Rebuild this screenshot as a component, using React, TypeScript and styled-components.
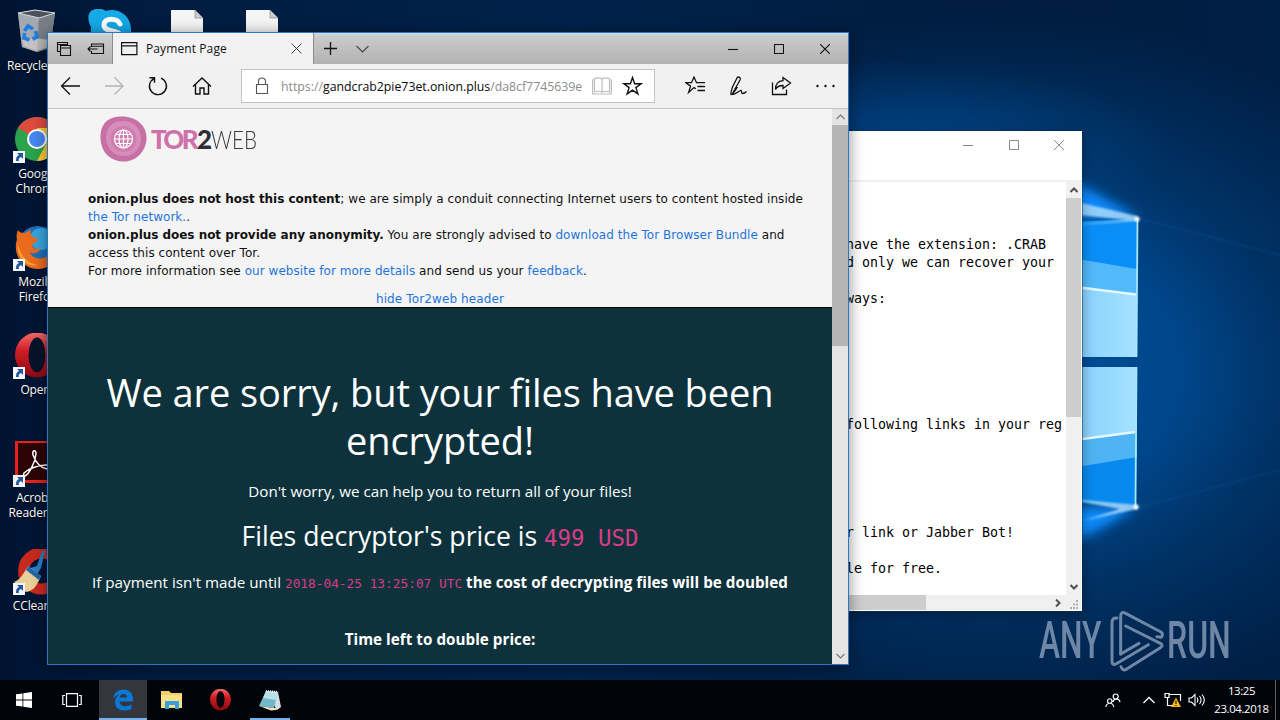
import React from "react";
import styled, { createGlobalStyle } from "styled-components";

const Global = createGlobalStyle`
  *, *::before, *::after { box-sizing: border-box; }
  body { margin: 0; background: #001a3c; }
  svg { display: block; flex: none; }
`;

const ui = `"Open Sans", "Noto Sans", sans-serif`;
const mono = `"DejaVu Sans Mono", monospace`;

/* ---------- desktop ---------- */

const Screen = styled.div`
  position: relative;
  display: flex;
  flex-direction: column;
  width: 1280px;
  height: 720px;
  overflow: hidden;
  font-family: ${ui};
  background:
    radial-gradient(ellipse 270px 90px at 900px 150px, rgba(0, 88, 170, 0.55), transparent),
    radial-gradient(ellipse 450px 360px at 1010px 370px, #00509a 0%, #00468a 38%, rgba(0, 56, 112, 0.75) 62%, rgba(0, 32, 70, 0) 100%),
    linear-gradient(90deg, #001331 0%, #001c40 12%, #00224a 45%, #001c3e 80%, #001f45 100%);
`;

const Wallpaper = styled.svg`
  position: absolute;
  inset: 0;
`;

const Desktop = styled.main`
  flex: 1;
  display: flex;
  padding-top: 9px;
  min-height: 0;
`;

const IconColumn = styled.div`
  width: 75px;
`;

const Shortcut = styled.div`
  display: flex;
  flex-direction: column;
  align-items: center;
  width: 75px;
  height: 108px;
  padding-right: 1px;
  position: relative;
`;

const ShortcutLabel = styled.div<{ $shift?: number }>`
  margin-top: 1px;
  padding-left: ${(p) => p.$shift ?? 0}px;
  color: #fff;
  font-size: 12px;
  line-height: 15.4px;
  letter-spacing: -0.15px;
  text-align: center;
  white-space: nowrap;
  text-shadow: 0 1px 2px #000;
`;

/* ---------- windows ---------- */

const NotepadWindow = styled.section`
  position: absolute;
  left: 600px;
  top: 131px;
  width: 482px;
  height: 480px;
  display: grid;
  grid-template-columns: 1fr 15px;
  grid-template-rows: 51px 413px 15px;
  padding-right: 1px;
  background: #fff;
  box-shadow: 0 0 0 1px rgba(0, 50, 100, 0.45), 0 3px 12px rgba(0, 0, 0, 0.35);
`;

const NotepadHead = styled.header`
  grid-column: 1 / -1;
  display: flex;
  justify-content: flex-end;
  align-items: flex-start;
  border-bottom: 2px solid #f0f0f0;
  margin-right: -1px;
`;

const CaptionButton = styled.span<{ $w: number; $h: number }>`
  display: grid;
  place-items: center;
  width: ${(p) => p.$w}px;
  height: ${(p) => p.$h}px;
`;

const NotepadText = styled.pre`
  margin: 0;
  padding: 54px 0 0 246px;
  overflow: hidden;
  font: 13.29px/18px ${mono};
  color: #000;
`;

const VScroll = styled.div<{ $track: string }>`
  display: flex;
  flex-direction: column;
  align-items: center;
  background: ${(p) => p.$track};
`;

const ScrollButton = styled.span`
  display: grid;
  place-items: center;
  width: 16px;
  height: 16px;
`;

const Thumb = styled.span<{ $h: number; $color: string }>`
  width: 100%;
  height: ${(p) => p.$h}px;
  background: ${(p) => p.$color};
`;

const Spacer = styled.span`
  flex: 1;
`;

const HScroll = styled.div`
  display: flex;
  align-items: center;
  background: #f0f0f0;
`;

const HThumb = styled.span`
  width: 326px;
  height: 15px;
  background: #cdcdcd;
`;

const GripCell = styled.div`
  display: flex;
  align-items: flex-end;
  justify-content: flex-end;
  padding: 0 2px 1px 0;
  background: #f0f0f0;
`;

const BrowserWindow = styled.section`
  position: absolute;
  left: 47px;
  top: 32px;
  width: 802px;
  height: 633px;
  display: flex;
  flex-direction: column;
  border: 1px solid #2a78c2;
  background: #f4f4f4;
  box-shadow: 0 2px 14px rgba(0, 0, 0, 0.45);
`;

const TabStrip = styled.header`
  display: flex;
  height: 31px;
  background: linear-gradient(#c9dbea 0, #cbcbcb 3px, #b2b2b2 100%);
`;

const TabTools = styled.div`
  display: flex;
  align-items: center;
  width: 65px;
  padding-left: 8px;
  gap: 15px;
  border-right: 1px solid #8d8d8d;
`;

const Tab = styled.div`
  display: flex;
  align-items: center;
  width: 201px;
  padding: 0 11px 0 8px;
  background: #f2f2f2;
  border-right: 1px solid #8d8d8d;
`;

const TabTitle = styled.span`
  flex: 1;
  padding-left: 8px;
  font-size: 12px;
  letter-spacing: 0.1px;
  color: #111;
`;

const TabActions = styled.div`
  display: flex;
  align-items: center;
  flex: 1;
  gap: 19px;
  padding-left: 10px;
`;

const Toolbar = styled.nav`
  display: flex;
  align-items: center;
  height: 45px;
  padding: 0 11px 0 11px;
  background: #f1f1f1;
  border-bottom: 1px solid #c4c4c4;
`;

const NavButtons = styled.div`
  display: flex;
  gap: 20px;
  width: 182px;
`;

const AddressBar = styled.div`
  display: flex;
  align-items: center;
  width: 414px;
  height: 34px;
  padding: 0 10px 0 12px;
  background: #fff;
  border: 1px solid #c3c3c3;
`;

const Url = styled.span`
  flex: 1;
  padding-left: 11px;
  font-size: 12.3px;
  color: #8c8c8c;
  white-space: nowrap;
`;

const UrlHost = styled.span`
  color: #0a0a0a;
`;

const ToolButtons = styled.div`
  display: flex;
  align-items: center;
  gap: 22px;
  margin-left: 30px;
`;

const Viewport = styled.div`
  flex: 1;
  display: flex;
  min-height: 0;
`;

const Page = styled.div`
  flex: 1;
  overflow: hidden;
`;

const ProxyHeader = styled.div`
  height: 199px;
  padding: 7px 0 0 40px;
  border-bottom: 1px solid #000;
  background: #f4f4f4;
  font: 12px/18px "DejaVu Sans", Verdana, sans-serif;
  letter-spacing: 0.05px;
  color: #111;

  b { letter-spacing: -0.03px; }
`;

const Logo = styled.div`
  display: flex;
  align-items: center;
  height: 46px;
  padding-left: 12px;
  font-family: Lato, sans-serif;
  font-size: 26px;
  line-height: 46px;
`;

const LogoTor = styled.span`
  width: 46px;
  margin-left: 4px;
  font-weight: 900;
  letter-spacing: -2.8px;
  color: #cf72ab;
`;

const LogoTwo = styled.span`
  width: 14px;
  font-weight: 900;
  color: #2d2d33;
`;

const LogoWeb = styled.span`
  font-weight: 300;
  color: #3a3a3a;
  transform: scaleX(0.79);
  transform-origin: left;
`;

const Notice = styled.p`
  margin: 28px 0 0;
  white-space: nowrap;
`;

const Link = styled.span`
  color: #1f74dc;
`;

const HideLink = styled.div`
  margin: 10px 0 0 -40px;
  text-align: center;
  letter-spacing: 0.12px;
`;

const Ransom = styled.div`
  height: 357px;
  padding-top: 60px;
  background: #0e323c;
  color: #fff;
  text-align: center;
  white-space: nowrap;
`;

const Title = styled.h1`
  margin: 0;
  font-size: 38px;
  font-weight: 400;
  line-height: 48px;
  letter-spacing: -0.1px;
`;

const Lead = styled.p`
  margin: 15px 0 0;
  font-size: 15.2px;
  line-height: 24px;
`;

const Price = styled.h2`
  margin: 16px 0 0;
  font-size: 26.6px;
  font-weight: 400;
  line-height: 34px;
`;

const Code = styled.code<{ $size: number }>`
  font-family: ${mono};
  font-size: ${(p) => p.$size}px;
  color: #d93c87;
`;

const Deadline = styled.p`
  margin: 15px 0 0;
  font-size: 15.2px;
  line-height: 24px;
`;

const Strong = styled.strong`
  font-weight: 700;
  letter-spacing: 0.04px;
`;

const Timer = styled.p`
  margin: 31px 0 0;
  font-size: 15.2px;
  line-height: 24px;
`;

/* ---------- watermark and taskbar ---------- */

const Watermark = styled.div`
  position: absolute;
  left: 1039px;
  top: 608px;
  display: flex;
  align-items: center;
  height: 66px;
  color: #8b9fbb;
  opacity: 0.8;
  font: 500 52px/66px Roboto, sans-serif;
`;

const Word = styled.span<{ $w: number; $scale: number }>`
  width: ${(p) => p.$w}px;
  transform: scaleX(${(p) => p.$scale});
  transform-origin: left;
`;

const Taskbar = styled.footer`
  position: relative;
  display: flex;
  height: 40px;
  background: #010409;
`;

const TaskButton = styled.span<{ $active?: boolean; $gap?: number }>`
  display: grid;
  place-items: center;
  width: 48px;
  height: 40px;
  margin-left: ${(p) => p.$gap ?? 0}px;
  background: ${(p) => (p.$active ? "#33373d" : "transparent")};
  box-shadow: ${(p) => (p.$active ? "inset 0 -2px #76b2ea" : "none")};
`;

const RunningButton = styled(TaskButton)`
  width: 40px;
  box-shadow: inset 0 -2px #76b2ea;
`;

const Tray = styled.div`
  display: flex;
  align-items: center;
  margin-left: auto;
`;

const TrayIcon = styled.span<{ $w: number }>`
  display: grid;
  place-items: center;
  width: ${(p) => p.$w}px;
`;

const Clock = styled.div`
  width: 66px;
  padding-right: 1px;
  color: #fff;
  font-size: 11.4px;
  line-height: 18px;
  letter-spacing: -0.38px;
  text-align: center;
`;

const ShowDesktop = styled.span`
  width: 5px;
  height: 40px;
  border-left: 1px solid #5b5f66;
`;

/* ---------- icons ---------- */

const Stroke = ({ w, h, d, c = "#111", s = 1.1 }: { w: number; h: number; d: string; c?: string; s?: number }) => (
  <svg width={w} height={h} viewBox={`0 0 ${w} ${h}`} fill="none" stroke={c} strokeWidth={s}>
    <path d={d} />
  </svg>
);

const Arrow = () => (
  <g>
    <rect x="0" y="34" width="12" height="12" fill="#f4f8fc" />
    <path d="M3 44c0-4 1-5 3-6l-2-2h6v6l-2-2c-2 1-3 2-2 4z" fill="#23569f" />
  </g>
);

const RecycleIcon = () => (
  <svg width="48" height="48" viewBox="0 0 48 48">
    <path d="M5 4 22 1l20 3-5 35-13 4-15-5z" fill="#8d949c" />
    <path d="M5 4 26 9l-2 34-15-5z" fill="#a3a9b0" />
    <path d="M26 9 42 4l-5 35-13 4z" fill="#797f86" />
    <path d="m5 4 17-3 20 3-16 5z" fill="#4b5259" stroke="#d8dde2" strokeWidth="1" />
    <path d="m9 31 14-2 13 2-1 7-11 4-13-5z" fill="#d5cfca" opacity=".7" />
    <g fill="none" stroke="#1f7fe0" strokeWidth="3.6">
      <path d="m11.500 22 3.500-5 5 3M22.500 22l1.500 6-4.500 2M16.500 31l-5.500-2 .5-5" />
    </g>
  </svg>
);

const ChromeIcon = () => (
  <svg width="48" height="48" viewBox="0 0 48 48">
    <circle cx="24" cy="22" r="22" fill="#2ba24c" />
    <path d="M24 22 5 11A22 22 0 0 1 43 11z" fill="#dd4b3e" />
    <path d="M24 11h19a22 22 0 0 1-19 33l9-17z" fill="#fcc934" />
    <circle cx="24" cy="22" r="10" fill="#fff" />
    <circle cx="24" cy="22" r="8" fill="#4688f1" />
    <Arrow />
  </svg>
);

const FirefoxIcon = () => (
  <svg width="48" height="48" viewBox="0 0 48 48">
    <circle cx="25" cy="22" r="21" fill="#1d6fb8" />
    <circle cx="28" cy="14" r="11" fill="#37a4dd" />
    <path d="M5 5c2 3 4 3 7 3 3-2 5-3 6-3-1 3 0 5 2 7l5 2c-1 4-6 4-6 7 2 4 6 3 9 3-3 5-9 5-11 3 2 7 12 9 19 3 4-3 6-8 6-12 7 12-2 26-17 26C10 44-1 30 4 14c-1-3 0-7 1-9z" fill="#ea6a1e" />
    <path d="M5 18c2 12 8 20 20 22-12 3-22-8-20-22z" fill="#f7a32b" />
    <Arrow />
  </svg>
);

const OperaIcon = ({ size = 48, arrow = true }: { size?: number; arrow?: boolean }) => (
  <svg width={size} height={size} viewBox="0 0 48 48">
    <defs>
      <linearGradient id="opera" x1="0" y1="0" x2="0" y2="1">
        <stop offset="0" stopColor="#f36b69" />
        <stop offset=".4" stopColor="#cf1d25" />
        <stop offset="1" stopColor="#8d0a12" />
      </linearGradient>
    </defs>
    <ellipse cx="24" cy="22" rx="22" ry="22.500" fill="url(#opera)" />
    <ellipse cx="24" cy="22" rx="8.500" ry="17.500" fill={arrow ? "#07132b" : "#020409"} />
    {arrow && <Arrow />}
  </svg>
);

const AcrobatIcon = () => (
  <svg width="48" height="48" viewBox="0 0 48 48">
    <rect x="3.500" y=".5" width="43" height="40" fill="#2c0406" stroke="#e8221a" strokeWidth="3" />
    <path d="M12 35c4-2 10-13 11-22 0-5-4-4-3 1 3 8 8 13 14 14 6 0 5-4-1-4-8 0-18 4-22 8-1 2 0 3 1 3z" fill="none" stroke="#fff" strokeWidth="1.500" />
    <Arrow />
  </svg>
);

const CCleanerIcon = () => (
  <svg width="48" height="48" viewBox="0 0 48 48">
    <path d="M42 10A18 18 0 1 0 42 34" fill="none" stroke="#c8291f" strokeWidth="11" />
    <path d="M29 2h3l-4 17-5 8-9-7 10-3z" fill="#2b7cc8" />
    <path d="m15 17 13 10c-4 10-8 15-15 16L1 33c6-2 10-9 14-16z" fill="#e9cf98" />
    <path d="m15 17 13 10-2 4-13-10z" fill="#2165ab" />
    <Arrow />
  </svg>
);

const SkypeIcon = () => (
  <svg width="48" height="48" viewBox="0 0 48 48">
    <path d="M3 2C7-1 14-1 18 2c13-4 26 6 25 20l1 20H14C4 36 2 28 3 18 0 12-1 6 3 2z" fill="#15a9e8" />
    <path d="M32 15c-2-6-16-7-16 1 0 8 16 4 16 11 0 6-13 6-16-1" fill="none" stroke="#fff" strokeWidth="5" strokeLinecap="round" />
  </svg>
);

const FileIcon = () => (
  <svg width="48" height="48" viewBox="0 0 48 48">
    <path d="M8 1h24l8 8v38H8z" fill="#f5f5f5" />
    <path d="M32 1v8h8z" fill="#c9ccd0" stroke="#8f9499" strokeWidth=".8" />
  </svg>
);

const GlobeBadge = () => (
  <svg width="47" height="46" viewBox="0 0 47 46">
    <path d="M22 .5c14 0 25 9 24.500 22S36 45.500 24 45.500 1 38 .5 22 10 .5 22 .5z" fill="#c770a5" />
    <path d="M23 5c11 0 18 8 18 18s-8 17-17 17S6 33 6 22 13 5 23 5z" fill="#d78dba" />
    <circle cx="23.500" cy="23" r="13" fill="#cf7db0" />
    <g fill="none" stroke="#fff" strokeWidth="1.200">
      <circle cx="23.500" cy="23" r="9" />
      <ellipse cx="23.500" cy="23" rx="4.500" ry="9" />
      <path d="M23.500 14v18M14.500 23h18M16 18.500h15M16 27.500h15" />
    </g>
  </svg>
);

const Grip = () => (
  <svg width="9" height="9" fill="#b0b0b0">
    <path d="M6 0h2v2H6zM6 3.500h2v2H6zM6 7h2v2H6zM3 3.500h2v2H3zM3 7h2v2H3zM0 7h2v2H0z" />
  </svg>
);

const AnyRunMark = () => (
  <svg width="58" height="65" viewBox="268 25 174 195" fill="none" stroke="currentColor" strokeWidth="9" strokeLinejoin="round" strokeLinecap="round">
    <path d="M292 52Q277 50 277 66V182Q277 196 290 189L386 132" />
    <path d="M303 160V48Q303 30 318 38L424 94Q433 101 424 110L412 108" />
    <path d="M318 76 422 128Q432 134 422 141L320 206Q308 212 304 198" />
    <path d="M303 160 358 128" />
  </svg>
);

/* ---------- screen ---------- */

const shortcuts = [
  { icon: <RecycleIcon />, label: ["Recycle Bin"], shift: 1 },
  { icon: <ChromeIcon />, label: ["Google", "Chrome"], shift: 1 },
  { icon: <FirefoxIcon />, label: ["Mozilla", "Firefox"], shift: 1 },
  { icon: <OperaIcon />, label: ["Opera"], shift: 1 },
  { icon: <AcrobatIcon />, label: ["Acrobat", "Reader DC"], shift: 1 },
  { icon: <CCleanerIcon />, label: ["CCleaner"], shift: 1 },
];

const note = [
  "have the extension: .CRAB", "d only we can recover your", "", "ways:", "", "", "", "", "", "",
  "following links in your reg", "", "", "", "", "", "r link or Jabber Bot!", "", "le for free.",
].join("\n");

export default function App() {
  return (
    <>
      <Global />
      <Screen>
        <Wallpaper width="1280" height="680" viewBox="0 0 1280 680">
          <defs>
            <filter id="soft" x="-50%" y="-50%" width="200%" height="200%">
              <feGaussianBlur stdDeviation="6" />
            </filter>
            <filter id="fine" x="-50%" y="-50%" width="200%" height="200%">
              <feGaussianBlur stdDeviation="1.300" />
            </filter>
            <linearGradient id="pane" x1="0" x2="1" y1="0" y2="0">
              <stop offset="0" stopColor="#7dccff" />
              <stop offset="1" stopColor="#a6e2ff" />
            </linearGradient>
          </defs>
          <path d="M1060 176 1090 190 1140 218H1060zM1060 545 1095 532 1138 507H1060z" fill="#0a8cff" filter="url(#soft)" />
          <path d="M1060 222 1137 219V357H1060z" fill="#0a8ef5" />
          <path d="M1060 256 1137 269V357H1060z" fill="#52b9fa" />
          <path d="M1060 285 1137 295V357H1060z" fill="url(#pane)" />
          <path d="M1060 285 1136 294.500" stroke="#e6f8ff" strokeWidth="2.500" />
          <path d="M1060 367H1137L1135 506 1060 500z" fill="#0789ee" />
          <path d="M1060 367H1137V457L1060 470z" fill="#4fb4f3" />
          <path d="M1060 367H1137V431L1060 441z" fill="url(#pane)" />
          <path d="M1060 442 1135 432" stroke="#e6f8ff" strokeWidth="2.500" />
          <path d="M1137.500 219 1136.500 357M1136.500 367 1135.500 506" stroke="#a6e6ff" strokeWidth="1.800" />
          <path d="M1060 198 1137 216V221L1060 213zM1060 226 1137 219V221zM1060 498 1137 505V509L1082 521 1120 509z" fill="#a8dcff" opacity=".85" filter="url(#fine)" />
          <path d="M1137 218 1280 255M1137 508 1280 470" stroke="#1672c4" strokeWidth="1.500" opacity=".22" filter="url(#fine)" />
          <circle cx="1137" cy="219" r="2.500" fill="#fff" filter="url(#fine)" />
          <circle cx="1136" cy="507" r="2.500" fill="#fff" filter="url(#fine)" />
        </Wallpaper>

        <Desktop>
          <IconColumn>
            {shortcuts.map((s) => (
              <Shortcut key={s.label[0]}>
                {s.icon}
                <ShortcutLabel $shift={s.shift}>
                  {s.label.map((line) => (
                    <div key={line}>{line}</div>
                  ))}
                </ShortcutLabel>
              </Shortcut>
            ))}
          </IconColumn>
          <Shortcut><SkypeIcon /></Shortcut>
          <Shortcut><FileIcon /></Shortcut>
          <Shortcut><FileIcon /></Shortcut>
        </Desktop>

        <NotepadWindow>
          <NotepadHead>
            <CaptionButton $w={46} $h={28}><Stroke w={10} h={10} c="#8a8a8a" s={1} d="M0 5.500h10" /></CaptionButton>
            <CaptionButton $w={45} $h={28}><Stroke w={10} h={10} c="#8a8a8a" s={1} d="M.5 .5h9v9h-9z" /></CaptionButton>
            <CaptionButton $w={46} $h={28}><Stroke w={10} h={10} c="#8a8a8a" s={1} d="m0 0 10 10M10 0 0 10" /></CaptionButton>
          </NotepadHead>
          <NotepadText>{note}</NotepadText>
          <VScroll $track="#f0f0f0">
            <ScrollButton><Stroke w={8} h={6} c="#505050" s={2} d="M.5 5 4 1.500 7.500 5" /></ScrollButton>
            <Thumb $h={219} $color="#cdcdcd" />
            <Spacer />
            <ScrollButton><Stroke w={8} h={6} c="#505050" s={2} d="M.5 1 4 4.500 7.500 1" /></ScrollButton>
          </VScroll>
          <HScroll>
            <HThumb />
            <Spacer />
            <ScrollButton><Stroke w={6} h={8} c="#505050" s={2} d="M1 .5 4.500 4 1 7.500" /></ScrollButton>
          </HScroll>
          <GripCell><Grip /></GripCell>
        </NotepadWindow>

        <BrowserWindow>
          <TabStrip>
            <TabTools>
              <Stroke w={16} h={16} s={1.1} d="M4.500 10.500h-3v-9h10v3M1.500 3.500h10M4.500 4.500h10v10h-10zM4.500 7h10" />
              <Stroke w={18} h={12} s={1.1} d="M4.500 4V1h12v9.500h-12V8M4.500 3.300h12M1 6h9.500M3.500 3.500 1 6l2.500 2.500" />
            </TabTools>
            <Tab>
              <Stroke w={17} h={14} s={1.2} d="M.6 .6h15.300v12H.6zM.6 3.800h15.300" />
              <TabTitle>Payment Page</TabTitle>
              <Stroke w={11} h={11} c="#444" s={1} d="m.5 .5 10 10M10.500 .5l-10 10" />
            </Tab>
            <TabActions>
              <Stroke w={13} h={13} s={1.3} d="M6.500 0v13M0 6.500h13" />
              <Stroke w={13} h={8} c="#444" d="m.5 1 6 6 6-6" />
            </TabActions>
            <CaptionButton $w={46} $h={31}><Stroke w={10} h={10} d="M0 5.500h10" /></CaptionButton>
            <CaptionButton $w={46} $h={31}><Stroke w={10} h={10} d="M.5 .5h9v9h-9z" /></CaptionButton>
            <CaptionButton $w={46} $h={31}><Stroke w={10} h={10} d="m0 0 10 10M10 0 0 10" /></CaptionButton>
          </TabStrip>

          <Toolbar>
            <NavButtons>
              <Stroke w={24} h={20} s={1.3} d="M21 10H3M11 1.500 2.500 10l8.500 8.500" />
              <Stroke w={24} h={20} s={1.3} c="#b2b2b2" d="M2 10h18M11.500 1.500 20 10l-8.500 8.500" />
              <Stroke w={24} h={20} s={1.4} d="M14 2.200A8.500 8.500 0 1 1 7 2.600M2.500 1.800h5v5" />
              <Stroke w={24} h={20} s={1.4} d="m2 10.500 9-8.500 9 8.500M4.500 8.500v9.500h4.500v-6h4v6h4.500V8.500" />
            </NavButtons>
            <AddressBar>
              <Stroke w={16} h={18} c="#555" d="M2.500 7.500h11v9h-11zM4.500 7.500V4.500a3.500 3.500 0 0 1 7 0v3" />
              <Url>https://<UrlHost>gandcrab2pie73et.onion.plus</UrlHost>/da8cf7745639e</Url>
              <Stroke w={20} h={18} c="#bdbdbd" s={1.2} d="M2.500 1.500c3-1 5.500-1 7.500.5v13c-2-1-4.500-1-7.500 0zM17.500 1.500c-3-1-5.500-1-7.500.5v13c2-1 4.500-1 7.500 0zM2.500 3H.6v14h18.800V3h-1.900" />
              <svg width="32" height="20" viewBox="-8 0 32 20" fill="none" stroke="#111" strokeWidth="1.400">
                <path d="m12.500 1.500 2.100 6.200h6.500l-5.200 3.900 2 6.300-5.400-3.800-5.400 3.800 2-6.300-5.200-3.900h6.500z" />
              </svg>
            </AddressBar>
            <ToolButtons>
              <Stroke w={21} h={20} s={1.3} d="M11 12.800l-2-1.200-5.400 4.800 2-6.300-4.800-3.400h5.700L9 1l2.500 5.700H20M12.500 10.500H20M12.500 14.500H20" />
              <Stroke w={21} h={20} s={1.3} d="M4.500 17.500 12 4c1-2.500-1.500-4-3-2L4.500 11c-1 3-2 6-1.500 7.500 2 0 5-5 6.500-7.500M4 18.500c4 0 6-3 8.500-4 2-.5 0 3 2 3 1.500 0 2.500-.5 4-2" />
              <Stroke w={21} h={20} s={1.3} d="M1.500 6.500v12h14v-5M12 1.500l7.500 5.500-7.500 5.500v-3c-4 0-6 1-7.500 4 0-5.500 3-8.500 7.500-8.800z" />
              <svg width="22" height="20" fill="#111">
                <circle cx="3.500" cy="10" r="1.200" />
                <circle cx="11.500" cy="10" r="1.200" />
                <circle cx="19.500" cy="10" r="1.200" />
              </svg>
            </ToolButtons>
          </Toolbar>

          <Viewport>
            <Page>
              <ProxyHeader>
                <Logo>
                  <GlobeBadge />
                  <LogoTor>TOR</LogoTor>
                  <LogoTwo>2</LogoTwo>
                  <LogoWeb>WEB</LogoWeb>
                </Logo>
                <Notice>
                  <b>onion.plus does not host this content</b>; we are simply a conduit connecting Internet users to content hosted inside
                  <br />
                  <Link>the Tor network.</Link>.
                  <br />
                  <b>onion.plus does not provide any anonymity.</b> You are strongly advised to <Link>download the Tor Browser Bundle</Link> and
                  <br />
                  access this content over Tor.
                  <br />
                  For more information see <Link>our website for more details</Link> and send us your <Link>feedback</Link>.
                </Notice>
                <HideLink><Link>hide Tor2web header</Link></HideLink>
              </ProxyHeader>
              <Ransom>
                <Title>
                  We are sorry, but your files have been
                  <br />
                  encrypted!
                </Title>
                <Lead>Don't worry, we can help you to return all of your files!</Lead>
                <Price>Files decryptor's price is <Code $size={22.4}>499 USD</Code></Price>
                <Deadline>
                  If payment isn't made until <Code $size={12.8}>2018-04-25 13:25:07 UTC</Code>{" "}
                  <Strong>the cost of decrypting files will be doubled</Strong>
                </Deadline>
                <Timer><Strong>Time left to double price:</Strong></Timer>
              </Ransom>
            </Page>
            <VScroll $track="#e4e4e4">
              <ScrollButton><Stroke w={9} h={6} c="#777" d="M.5 5 4.500 1l4 4" /></ScrollButton>
              <Thumb $h={221} $color="#b5b5b5" />
              <Spacer />
              <ScrollButton><Stroke w={9} h={6} c="#777" d="m.5 1 4 4 4-4" /></ScrollButton>
            </VScroll>
          </Viewport>
        </BrowserWindow>

        <Watermark>
          <Word $w={70} $scale={0.61}>ANY</Word>
          <AnyRunMark />
          <Word $w={66} $scale={0.615}>RUN</Word>
        </Watermark>

        <Taskbar>
          <TaskButton>
            <svg width="16" height="16" fill="#fff">
              <path d="M0 2.300 6.500 1.400v6.200H0zM7.300 1.300 16 0v7.600H7.300zM0 8.400h6.500v6.200L0 13.700zM7.300 8.400H16V16l-8.700-1.300z" />
            </svg>
          </TaskButton>
          <TaskButton><Stroke w={20} h={14} c="#fff" s={1.2} d="M4.500 .6h11v12.800h-11zM3 2.500H.8v9H3M17 2.500h2.200v9H17" /></TaskButton>
          <TaskButton $active $gap={3}>
            <svg width="22" height="22" viewBox="0 0 22 22">
              <path d="M1 10C2 4 6 .5 11.500 .5c6 0 9.500 4 9.500 9.500v2.500H7.500c.2 3 2.500 4.800 6 4.800 2.200 0 4.300-.6 6-1.700v4.500c-2 1-4.300 1.400-6.800 1.400C6.500 21.500 3 18 3 13c0-3.300 1.700-6 4.500-7.500C4.500 6 2.500 7.500 1 10zm6.600-1.400h7.600c0-2.300-1.200-3.700-3.500-3.700-2.200 0-3.700 1.400-4.100 3.700z" fill="#0a78d6" />
            </svg>
          </TaskButton>
          <TaskButton $gap={1}>
            <svg width="22" height="18" viewBox="0 0 22 18">
              <path d="M0 0h8l2 2h11v15H0z" fill="#f5cf63" />
              <path d="M0 4h21v13H0z" fill="#fbe08a" />
              <path d="M4 10h14v8h-4v-4H8v4H4z" fill="#36a3dd" />
            </svg>
          </TaskButton>
          <TaskButton $gap={0}><OperaIcon size={23} arrow={false} /></TaskButton>
          <RunningButton $gap={6}>
            <svg width="24" height="24" viewBox="0 0 24 24">
              <path d="m8 3 12 1 3 15-4 3z" fill="#d5dfe2" />
              <path d="M8 3 20 4 16 20 1 18z" fill="#72b8cc" />
              <path d="M8 3 20 4 18 12 5 10z" fill="#b9e0ea" />
              <path d="m1 18 15 2 6-1-4 3-5 .5z" fill="#e9e4c8" />
              <path d="m8 3 12 1" stroke="#eee" strokeDasharray="1 1" strokeWidth="2" />
            </svg>
          </RunningButton>
          <Tray>
            <TrayIcon $w={48}><Stroke w={16} h={16} c="#fff" s={1.2} d="M8.200 4.500a2.500 2.500 0 1 0 5 0 2.500 2.500 0 1 0-5 0M8 10c.5-3.500 6-4 7 0M2.500 9a2 2 0 1 0 4.500 0 2 2 0 1 0-4.500 0M.8 15c1-5 7-5 8 0" /></TrayIcon>
            <TrayIcon $w={24}><Stroke w={12} h={8} c="#fff" s={1.3} d="m.5 7 5.500-5.500L11.500 7" /></TrayIcon>
            <TrayIcon $w={24}>
              <svg width="18" height="16" viewBox="0 0 18 16" fill="none" stroke="#fff" strokeWidth="1.200">
                <path d="M5 2.500h11.500V9M3.500 6v7.500H8M1 1.500h4v4H1z" />
                <path d="m12 5.500 5 9.500H7z" fill="#f7b912" stroke="none" />
                <path d="M12 8.500v3.500M12 13v1" stroke="#222" />
              </svg>
            </TrayIcon>
            <TrayIcon $w={24}><Stroke w={18} h={14} c="#fff" d="M1 5h2.500L7 1.500v11L3.500 9H1zM9 4.500c1 1.500 1 3.500 0 5M11.500 3c2 2.500 2 5.500 0 8M14 1.500c3 3.500 3 7.500 0 11" /></TrayIcon>
            <Clock>13:25<br />23.04.2018</Clock>
            <ShowDesktop />
          </Tray>
        </Taskbar>
      </Screen>
    </>
  );
}
